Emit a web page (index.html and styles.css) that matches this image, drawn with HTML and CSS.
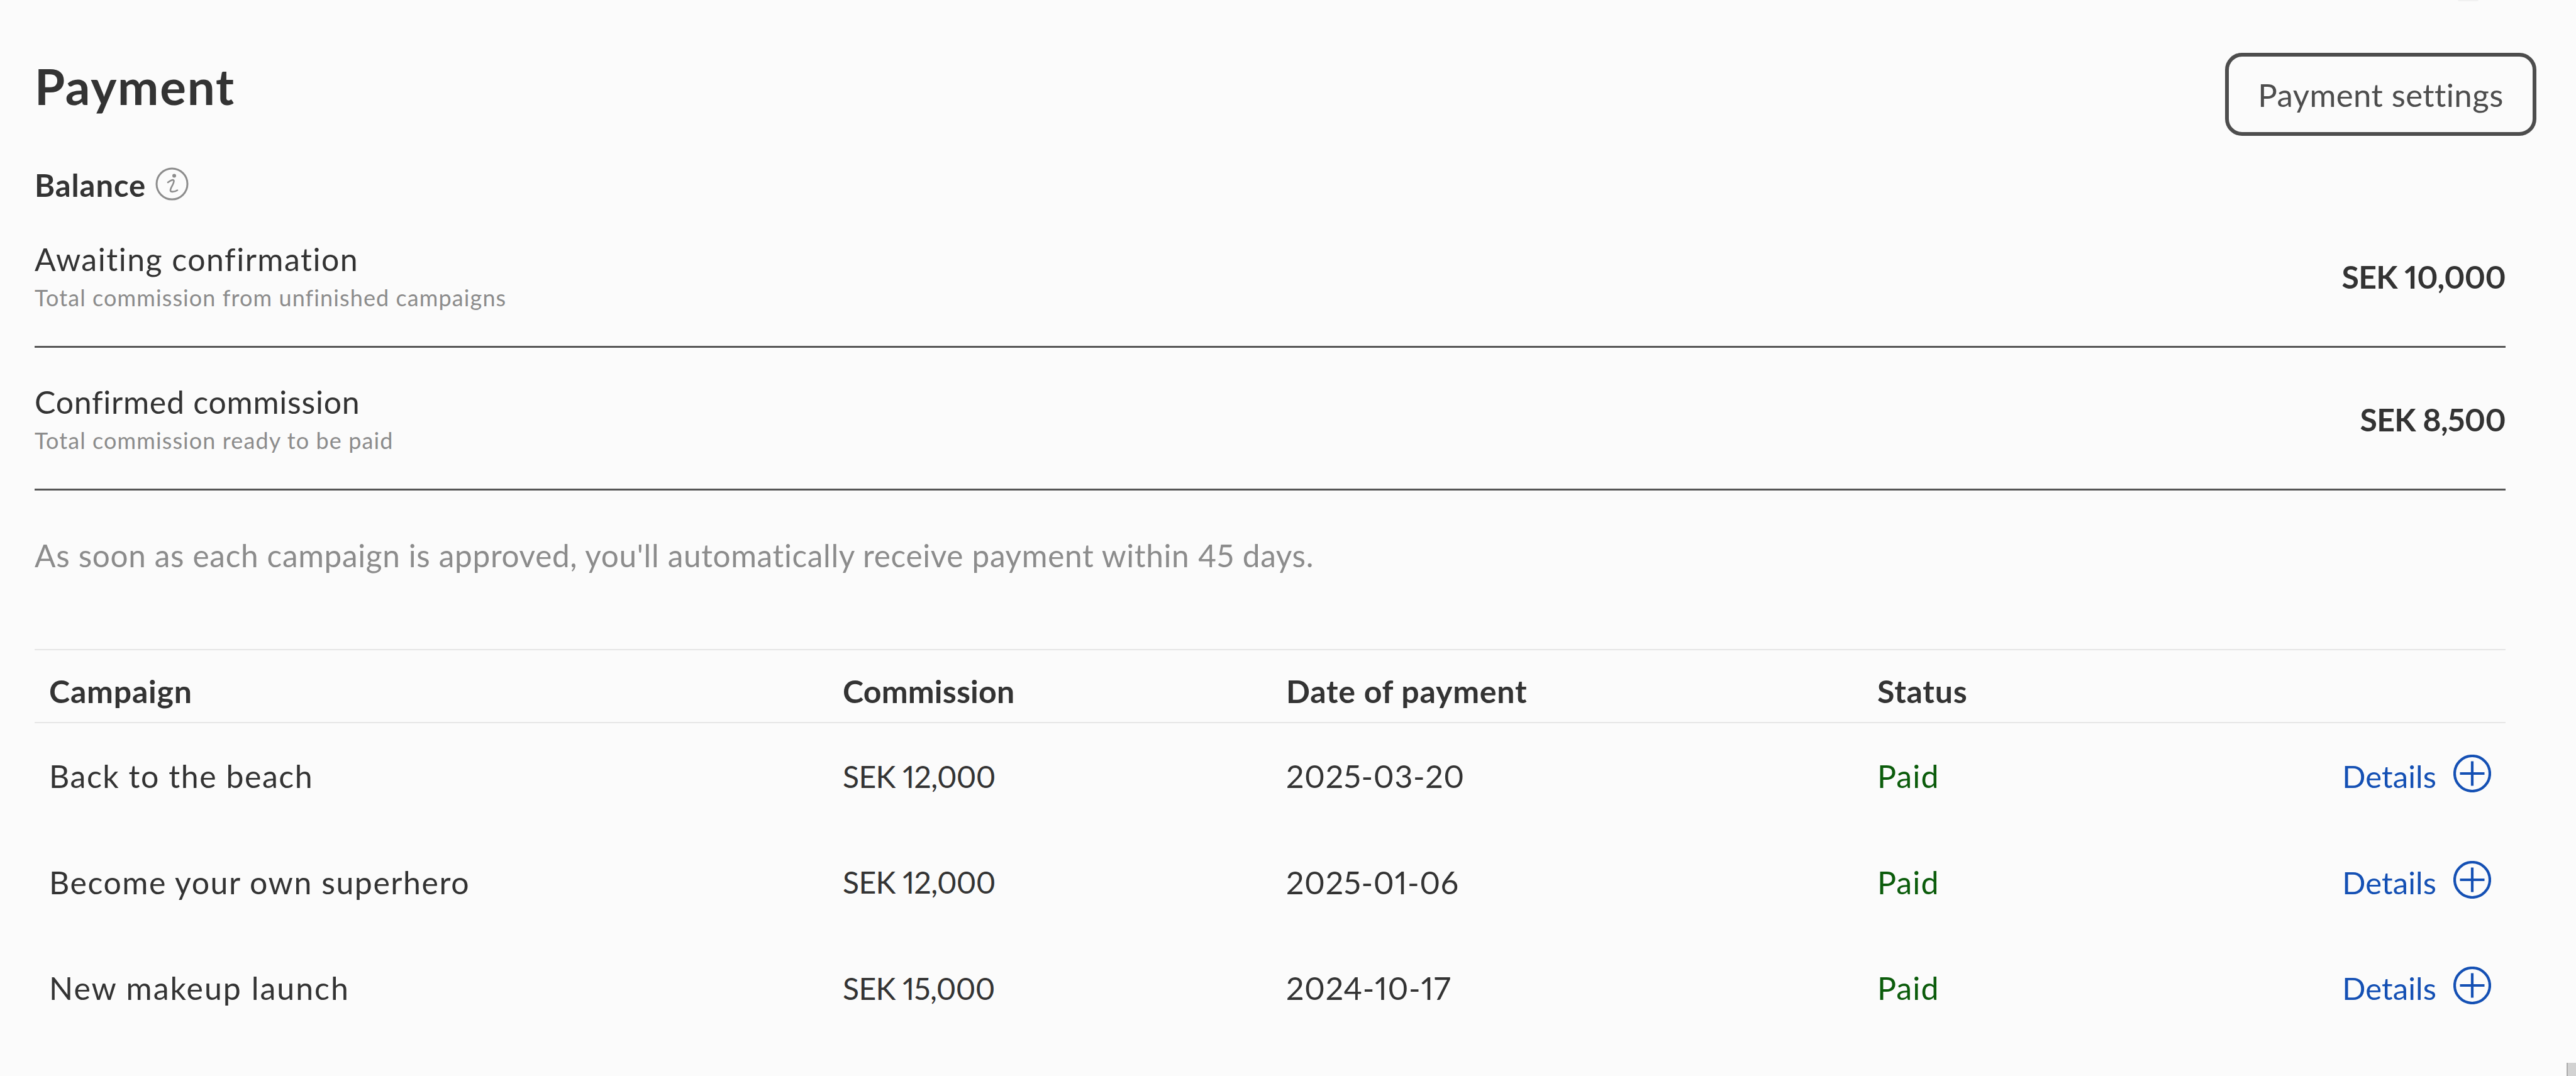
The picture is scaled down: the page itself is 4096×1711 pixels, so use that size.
FILE: index.html
```html
<!DOCTYPE html>
<html lang="en">
<head>
<meta charset="utf-8">
<title>Payment</title>
<link rel="stylesheet" href="styles.css">
</head>
<body>
<div class="top-blob"></div>
<main class="page">
  <header class="head">
    <h1 class="title">Payment</h1>
    <button class="settings">Payment settings</button>
  </header>
  <div class="balance">
    <h2 class="balance-label">Balance</h2>
    <svg class="info" viewBox="0 0 53 53" fill="none" stroke="#8c8c8c"><circle cx="26.5" cy="26.5" r="24.5" stroke-width="3"/><path d="M20 24C24 21 29 18.500 29.500 21.500C30 26 23.500 33 24 37C24.500 40 31 39 35 36.500" stroke-width="2.600" stroke-linecap="round"/><circle cx="30" cy="13.600" r="3" fill="#8c8c8c" stroke="none"/></svg>
  </div>
  <section class="summary">
    <div class="sum-text"><div class="sum-title">Awaiting confirmation</div><div class="sum-sub">Total commission from unfinished campaigns</div></div>
    <div class="sum-amount">SEK 10,000</div>
  </section>
  <section class="summary">
    <div class="sum-text"><div class="sum-title tight">Confirmed commission</div><div class="sum-sub">Total commission ready to be paid</div></div>
    <div class="sum-amount">SEK 8,500</div>
  </section>
  <p class="note">As soon as each campaign is approved, you'll automatically receive payment within 45 days.</p>
  <div class="table">
    <div class="row row-head"><div>Campaign</div><div class="head-narrow">Commission</div><div>Date of payment</div><div>Status</div><div></div></div>
    <div class="row"><div class="name">Back to the beach</div><div class="num">SEK 12,000</div><div class="date">2025-03-20</div><div class="paid">Paid</div><a class="details">Details <svg class="plus" viewBox="0 0 60 60" fill="none" stroke="#1450b4" stroke-width="4.200"><circle cx="30" cy="30" r="28"/><path d="M30 10.500v39M10.500 30h39"/></svg></a></div>
    <div class="row"><div class="name">Become your own superhero</div><div class="num">SEK 12,000</div><div class="date">2025-01-06</div><div class="paid">Paid</div><a class="details">Details <svg class="plus" viewBox="0 0 60 60" fill="none" stroke="#1450b4" stroke-width="4.200"><circle cx="30" cy="30" r="28"/><path d="M30 10.500v39M10.500 30h39"/></svg></a></div>
    <div class="row"><div class="name wide">New makeup launch</div><div class="num">SEK 15,000</div><div class="date">2024-10-17</div><div class="paid">Paid</div><a class="details">Details <svg class="plus" viewBox="0 0 60 60" fill="none" stroke="#1450b4" stroke-width="4.200"><circle cx="30" cy="30" r="28"/><path d="M30 10.500v39M10.500 30h39"/></svg></a></div>
  </div>
</main>
<div class="corner"></div>
</body>
</html>
```
FILE: styles.css
```css
html, body { margin: 0; height: 100%; background: #fbfbfb; overflow: hidden; }
body { font-family: Lato, "Liberation Sans", sans-serif; color: #333; font-size: 50px; font-variant-numeric: proportional-nums; }
.page { padding: 84px 112px 0 55px; }
.head { display: flex; justify-content: space-between; align-items: flex-start; height: 132px; }
.title { margin: 0; font-size: 78px; font-weight: 700; line-height: 106px; letter-spacing: 1.8px; }
.settings { width: 495px; height: 132px; margin-right: -49px; background: transparent; border: 6px solid #4d4d4d; border-radius: 27px; font: 400 51px Lato, sans-serif; letter-spacing: 0.4px; color: #4d4d4d; padding: 0; }
.balance { display: flex; align-items: center; gap: 15px; margin-top: 48px; height: 61px; }
.balance-label { margin: 0; font-size: 49px; font-weight: 700; line-height: 61px; letter-spacing: 0.9px; }
.info { width: 53px; height: 53px; margin-top: -5px; }
.summary { display: flex; justify-content: space-between; align-items: center; padding: 57px 0 55px; border-bottom: 3px solid #555; }
.summary:last-of-type { padding-top: 56px; }
.sum-title { font-size: 50px; line-height: 60px; letter-spacing: 1.5px; }
.sum-title.tight { letter-spacing: 0.75px; }
.sum-sub { font-size: 36px; line-height: 44px; margin-top: 9px; color: #8c8c8c; letter-spacing: 1.1px; }
.sum-amount { font-size: 50px; font-weight: 700; letter-spacing: -0.7px; margin-top: 2px; }
.note { margin: 73px 0 0; font-size: 49.5px; line-height: 60px; color: #8c8c8c; letter-spacing: 0.67px; }
.table { margin-top: 119px; border-top: 2px solid #e6e6e6; }
.row { display: grid; grid-template-columns: 1262px 705px 940px 1fr auto; align-items: center; height: 168.5px; padding: 0 23px; }
.row-head { height: 98px; padding-top: 16px; border-bottom: 2px solid #e6e6e6; font-weight: 700; letter-spacing: 0.8px; }
.head-narrow { letter-spacing: 0.2px; }
.name { letter-spacing: 1.55px; }
.name.wide { letter-spacing: 2px; }
.num { font-size: 48px; letter-spacing: -0.65px; }
.date { letter-spacing: 0.7px; }
.paid { color: #0b5c0b; letter-spacing: 1.1px; }
.details { display: flex; align-items: center; gap: 27px; color: #1450b4; font-size: 49px; letter-spacing: 0.1px; }
.plus { width: 60px; height: 60px; margin-bottom: 8px; }
.corner { position: absolute; right: 0; bottom: 0; width: 13px; height: 21px; background: #d2d2d2; border-left: 2px solid #ababab; }
.top-blob { position: absolute; top: 0; left: 3908px; width: 33px; height: 2px; background: #f1f1f1; border-radius: 0 0 16px 16px; }
```
